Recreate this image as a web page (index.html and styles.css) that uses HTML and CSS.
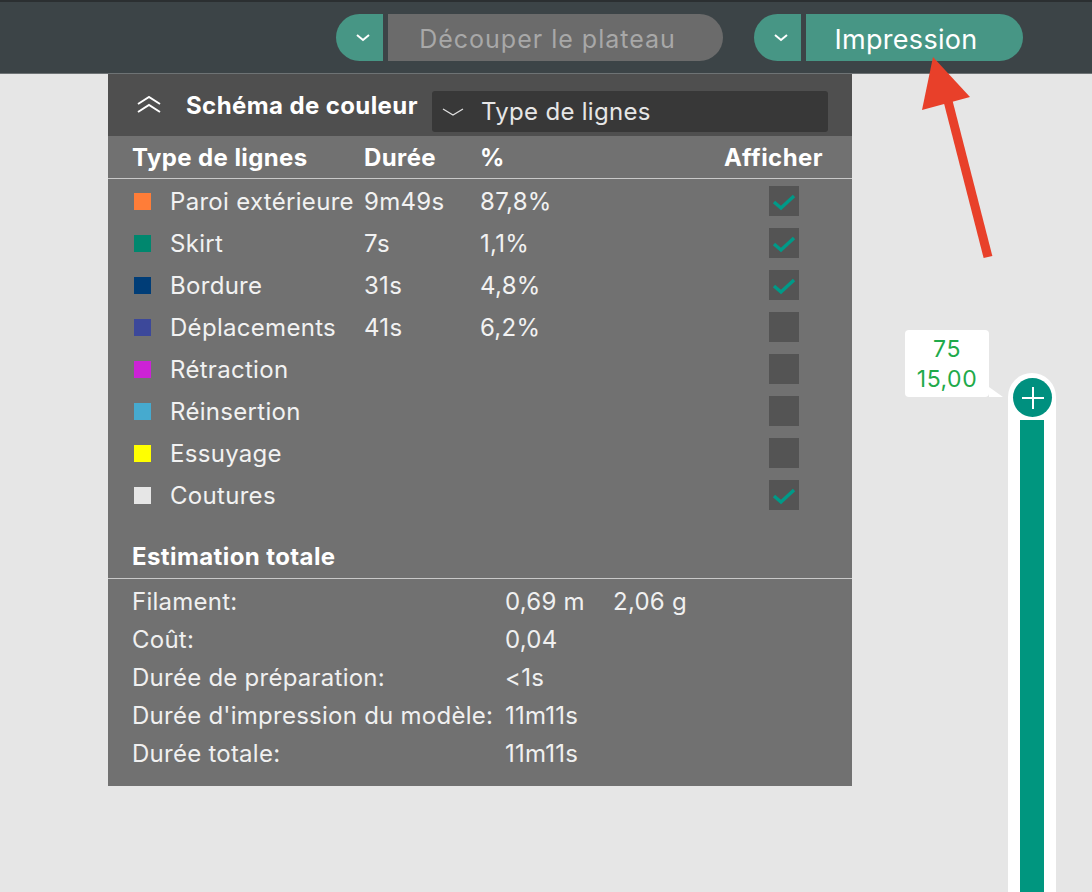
FILE: index.html
```html
<!DOCTYPE html>
<html lang="fr">
<head>
<meta charset="utf-8">
<link rel="stylesheet" href="styles.css">
</head>
<body>
<header class="topbar">
  <div class="split-btn disabled">
    <span class="split-arrow"><svg width="16" height="10" viewBox="0 0 16 10"><path d="M2 2 L8 7 L14 2" fill="none" stroke="#fff" stroke-width="2"/></svg></span>
    <span class="split-label">Découper le plateau</span>
  </div>
  <div class="split-btn primary">
    <span class="split-arrow"><svg width="16" height="10" viewBox="0 0 16 10"><path d="M2 2 L8 7 L14 2" fill="none" stroke="#fff" stroke-width="2"/></svg></span>
    <span class="split-label">Impression</span>
  </div>
</header>
<main class="canvas">
  <section class="panel">
    <div class="panel-head">
      <svg class="collapse-icon" width="26" height="18" viewBox="0 0 26 18"><path d="M2 8 L13 1 L24 8 M2 16 L13 9 L24 16" fill="none" stroke="#fff" stroke-width="2"/></svg>
      <span class="panel-title">Schéma de couleur</span>
      <div class="select">
        <svg width="22" height="10" viewBox="0 0 22 10"><path d="M1 2 L11 8 L21 2" fill="none" stroke="#e0e0e0" stroke-width="1.3"/></svg>
        <span>Type de lignes</span>
      </div>
    </div>
    <div class="row thead">
      <span class="c-name">Type de lignes</span>
      <span class="c-dur">Durée</span>
      <span class="c-pct">%</span>
      <span class="c-show">Afficher</span>
    </div>
    <div class="rows">
      <div class="row"><span class="c-name"><i class="sw" style="background:#ff7d38"></i>Paroi extérieure</span><span class="c-dur">9m49s</span><span class="c-pct">87,8%</span><span class="c-box"><span class="cb on"></span></span></div>
      <div class="row"><span class="c-name"><i class="sw" style="background:#00876e"></i>Skirt</span><span class="c-dur">7s</span><span class="c-pct">1,1%</span><span class="c-box"><span class="cb on"></span></span></div>
      <div class="row"><span class="c-name"><i class="sw" style="background:#003d77"></i>Bordure</span><span class="c-dur">31s</span><span class="c-pct">4,8%</span><span class="c-box"><span class="cb on"></span></span></div>
      <div class="row"><span class="c-name"><i class="sw" style="background:#3c489a"></i>Déplacements</span><span class="c-dur">41s</span><span class="c-pct">6,2%</span><span class="c-box"><span class="cb"></span></span></div>
      <div class="row"><span class="c-name"><i class="sw" style="background:#cc22d6"></i>Rétraction</span><span class="c-dur"></span><span class="c-pct"></span><span class="c-box"><span class="cb"></span></span></div>
      <div class="row"><span class="c-name"><i class="sw" style="background:#46aacf"></i>Réinsertion</span><span class="c-dur"></span><span class="c-pct"></span><span class="c-box"><span class="cb"></span></span></div>
      <div class="row"><span class="c-name"><i class="sw" style="background:#ffff00"></i>Essuyage</span><span class="c-dur"></span><span class="c-pct"></span><span class="c-box"><span class="cb"></span></span></div>
      <div class="row"><span class="c-name"><i class="sw" style="background:#e6e6e6"></i>Coutures</span><span class="c-dur"></span><span class="c-pct"></span><span class="c-box"><span class="cb on"></span></span></div>
    </div>
    <div class="est-title">Estimation totale</div>
    <div class="stats">
      <div class="stat"><span class="s-label">Filament:</span><span class="s-val">0,69 m</span><span class="s-val2">2,06 g</span></div>
      <div class="stat"><span class="s-label">Coût:</span><span class="s-val">0,04</span></div>
      <div class="stat"><span class="s-label">Durée de préparation:</span><span class="s-val">&lt;1s</span></div>
      <div class="stat"><span class="s-label">Durée d'impression du modèle:</span><span class="s-val">11m11s</span></div>
      <div class="stat"><span class="s-label">Durée totale:</span><span class="s-val">11m11s</span></div>
    </div>
  </section>

  <div class="slider">
    <div class="tip">
      <span>75</span>
      <span>15,00</span>
    </div>
    <div class="track">
      <div class="knob"><svg width="24" height="24" viewBox="0 0 24 24"><path d="M12 1 V23 M1 12 H23" stroke="#fff" stroke-width="2"/></svg></div>
      <div class="fill"></div>
    </div>
  </div>

  <svg class="arrow" width="90" height="220" viewBox="0 0 90 220">
    <polygon points="11,0 0,53 48,40" fill="#e8402a"/>
    <line x1="26" y1="44" x2="66" y2="200" stroke="#e8402a" stroke-width="9"/>
  </svg>
</main>
</body>
</html>
```
FILE: styles.css
```css
* { box-sizing: border-box; }
html, body { margin: 0; padding: 0; }
body {
  width: 1092px;
  height: 892px;
  overflow: hidden;
  background: #e6e6e6;
  font-family: Inter, "Noto Sans", "Liberation Sans", sans-serif;
  color: #f2f2f2;
}
.topbar {
  height: 74px;
  background: #3c4447;
  border-top: 2px solid #2b2f31;
  border-bottom: 1px solid #6e7375;
  display: flex;
  justify-content: flex-end;
  align-items: flex-start;
  gap: 31px;
  padding: 12px 69px 0 0;
}
.split-btn {
  display: flex;
  height: 47px;
  gap: 5px;
}
.split-arrow {
  width: 47px;
  height: 47px;
  background: #479685;
  border-radius: 24px 0 0 24px;
  display: flex;
  align-items: center;
  justify-content: center;
  padding-left: 6px;
}
.split-label {
  height: 47px;
  display: flex;
  align-items: center;
  justify-content: center;
  border-radius: 0 24px 24px 0;
  white-space: nowrap;
  padding-top: 3px;
}
.disabled .split-label {
  width: 335px;
  background: #6b6b6b;
  color: #a8a8a8;
  padding-right: 16px;
  font-size: 25px;
  letter-spacing: 1px;
}
.primary .split-label {
  width: 217px;
  background: #479685;
  color: #fff;
  font-size: 27px;
  letter-spacing: 0.3px;
  padding-right: 17px;
}
.canvas {
  position: relative;
  height: 818px;
}
.panel {
  margin-left: 108px;
  width: 744px;
  background: #717171;
  padding-bottom: 14px;
}
.panel-head {
  height: 62px;
  background: #4f4f4f;
  display: flex;
  align-items: center;
  padding-left: 28px;
}
.collapse-icon { margin-right: 24px; margin-top: 0; }
.panel-title {
  font-weight: 700;
  font-size: 24px;
  letter-spacing: 0.4px;
  color: #fff;
  width: 246px;
  white-space: nowrap;
}
.select {
  width: 396px;
  height: 41px;
  background: #383838;
  border-radius: 3px;
  display: flex;
  align-items: center;
  padding-left: 10px;
  gap: 17px;
  font-size: 24px;
  letter-spacing: 0.3px;
  color: #e6e6e6;
  margin-top: 13px;
}
.row {
  display: flex;
  align-items: center;
  height: 42px;
  font-size: 24px;
  letter-spacing: 0.3px;
  padding-left: 24px;
}
.thead {
  font-weight: 700;
  font-size: 24px;
  letter-spacing: 0.4px;
  color: #fff;
  border-bottom: 1px solid #c9c9c9;
  height: 43px;
}
.rows { padding-top: 1px; }
.c-name { width: 232px; display: flex; align-items: center; white-space: nowrap; }
.c-dur { width: 116px; white-space: nowrap; }
.c-pct { width: 244px; }
.c-show { width: 98px; text-align: right; white-space: nowrap; }
.c-box { width: 120px; display: flex; justify-content: center; }
.sw {
  width: 17px;
  height: 17px;
  margin: 0 19px 0 2px;
  display: inline-block;
  flex: none;
}
.cb {
  width: 30px;
  height: 30px;
  background: #545454;
  display: block;
}
.cb.on {
  background: #545454 url("data:image/svg+xml,%3Csvg xmlns='http://www.w3.org/2000/svg' width='30' height='30'%3E%3Cpath d='M5 16 L12 22 L25 10' fill='none' stroke='%23009a88' stroke-width='3.4'/%3E%3C/svg%3E") no-repeat;
}
.est-title {
  font-weight: 700;
  font-size: 24px;
  letter-spacing: 0.4px;
  color: #fff;
  padding: 26px 0 7px 24px;
  border-bottom: 1px solid #c9c9c9;
  line-height: 29px;
}
.stats { padding-top: 4px; }
.stat {
  display: flex;
  align-items: center;
  height: 37.8px;
  padding-left: 24px;
  font-size: 24px;
  letter-spacing: 0.25px;
  color: #f0f0f0;
}
.s-label { width: 373px; white-space: nowrap; }
.s-val { width: 108px; white-space: nowrap; }
.s-val2 { white-space: nowrap; }
.slider {
  position: absolute;
  left: 905px;
  top: 256px;
  width: 151px;
  height: 562px;
}
.tip {
  position: absolute;
  left: 0;
  top: 0;
  width: 84px;
  height: 67px;
  background: #fff;
  border-radius: 4px;
  color: #1faa4a;
  font-size: 23px;
  letter-spacing: 0.5px;
  display: flex;
  flex-direction: column;
  align-items: center;
  justify-content: center;
  line-height: 30px;
}
.tip::after {
  content: "";
  position: absolute;
  right: -14px;
  bottom: 0;
  border-style: solid;
  border-width: 10px 0 0 14px;
  border-color: transparent transparent transparent #fff;
}
.track {
  position: absolute;
  left: 103px;
  top: 43px;
  width: 48px;
  bottom: 0;
  background: #fff;
  border-radius: 24px 24px 0 0;
}
.knob {
  position: absolute;
  left: 5px;
  top: 5px;
  width: 39px;
  height: 39px;
  border-radius: 50%;
  background: #00907f;
  display: flex;
  align-items: center;
  justify-content: center;
}
.fill {
  position: absolute;
  left: 12px;
  top: 47px;
  width: 24px;
  bottom: 0;
  background: #00967f;
}
.arrow {
  position: absolute;
  left: 922px;
  top: -17px;
}
```
